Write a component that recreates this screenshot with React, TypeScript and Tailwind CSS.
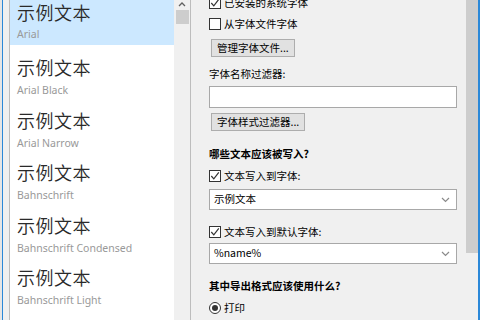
import React from "react";

const ui = { fontFamily: '"Noto Sans CJK SC", "Noto Sans", sans-serif' };
const latin = { fontFamily: '"Noto Sans", "Noto Sans CJK SC", sans-serif' };

const fonts = [
  "Arial Black",
  "Arial Narrow",
  "Bahnschrift",
  "Bahnschrift Condensed",
  "Bahnschrift Light",
];

function Check({ checked }: { checked: boolean }) {
  return (
    <div className="w-[12px] h-[12px] border border-[#333333] bg-white flex items-center justify-center shrink-0">
      {checked && (
        <svg width="10" height="10" viewBox="0 0 10 10">
          <path d="M1.3 5 L3.8 7.8 L8.8 1.3" fill="none" stroke="#333333" strokeWidth="1.2" />
        </svg>
      )}
    </div>
  );
}

function CheckRow({ checked, label, className }: { checked: boolean; label: string; className: string }) {
  return (
    <div className={"flex items-center gap-[3px] " + className}>
      <Check checked={checked} />
      <span className="text-[10.5px] text-black leading-none">{label}</span>
    </div>
  );
}

function Chevron() {
  return (
    <svg width="9" height="6" viewBox="0 0 9 6" className="shrink-0">
      <path d="M1 1 L4.5 4.5 L8 1" fill="none" stroke="#8a8a8a" strokeWidth="1.2" />
    </svg>
  );
}

function Select({ value, className }: { value: string; className: string }) {
  return (
    <div className={"w-[248px] h-[21px] border border-[#a8a8a8] bg-white flex items-center justify-between pl-[4px] pr-[6px] " + className}>
      <span className="text-[10.5px] text-black leading-none">{value}</span>
      <Chevron />
    </div>
  );
}

function Btn({ label, className }: { label: string; className: string }) {
  return (
    <div className={"self-start ml-[2px] h-[18px] border border-[#adadad] bg-[#e1e1e1] flex items-center px-[5px] " + className}>
      <span className="text-[10.5px] text-black leading-none">{label}</span>
    </div>
  );
}

export default function App() {
  return (
    <div className="w-[480px] h-[320px] bg-[#f0f0f0] flex overflow-hidden" style={ui}>
      {/* left edge */}
      <div className="w-[9px] h-full flex shrink-0">
        <div className="w-[2px] h-full bg-[#e6e6e6]" />
        <div className="w-[1px] h-full bg-[#2b88d8]" />
      </div>
      {/* font list */}
      <div className="w-[182px] h-full border-l border-r border-[#bdbdbd] bg-white flex shrink-0">
        <div className="flex-1 flex flex-col overflow-hidden">
          <div className="h-[45px] bg-[#cce8ff] flex flex-col pl-[7px] shrink-0">
            <span className="text-[18px] leading-none text-[#2a2a2a] font-[350] mt-[3px] tracking-[0.5px]">示例文本</span>
            <span className="text-[10.5px] leading-none text-[#999999] mt-[8px]" style={latin}>Arial</span>
          </div>
          {fonts.map((f) => (
            <div key={f} className="h-[52.5px] flex flex-col pl-[7px] shrink-0">
              <span className="text-[18px] leading-none text-[#2a2a2a] font-[350] mt-[13px] tracking-[0.5px]">示例文本</span>
              <span className="text-[10.5px] leading-none text-[#999999] mt-[9px]" style={latin}>{f}</span>
            </div>
          ))}
        </div>
        <div className="w-[16px] h-full bg-[#f0f0f0] flex flex-col items-center shrink-0">
          <svg width="8" height="6" viewBox="0 0 8 6" className="mt-[1px]">
            <path d="M1 5 L4 2 L7 5" fill="none" stroke="#606060" strokeWidth="1.3" />
          </svg>
          <div className="w-[13px] h-[14px] bg-[#cdcdcd] mt-[3px]" />
        </div>
      </div>
      {/* options panel */}
      <div className="w-[272px] h-full flex flex-col pl-[18px] shrink-0">
        <CheckRow checked label="已安装的系统字体" className="h-[20px] mt-[-7px]" />
        <CheckRow checked={false} label="从字体文件字体" className="h-[20px] mt-[1px]" />
        <Btn label="管理字体文件..." className="mt-[5px]" />
        <div className="h-[16px] mt-[9px] flex items-center text-[10.5px] text-black">字体名称过滤器:</div>
        <div className="w-[248px] h-[22px] mt-[4px] border border-[#a8a8a8] bg-white" />
        <Btn label="字体样式过滤器..." className="mt-[5px]" />
        <div className="h-[16px] mt-[15px] flex items-center text-[10.5px] font-bold text-black">哪些文本应该被写入?</div>
        <CheckRow checked label="文本写入到字体:" className="h-[20px] mt-[4px]" />
        <Select value="示例文本" className="mt-[3px]" />
        <CheckRow checked label="文本写入到默认字体:" className="h-[20px] mt-[12px]" />
        <Select value="%name%" className="mt-[1px]" />
        <div className="h-[16px] mt-[14px] flex items-center text-[10.5px] font-bold text-black">其中导出格式应该使用什么?</div>
        <div className="h-[20px] mt-[4px] flex items-center gap-[3px]">
          <div className="w-[12px] h-[12px] rounded-full border border-[#333333] bg-white flex items-center justify-center">
            <div className="w-[6px] h-[6px] rounded-full bg-[#333333]" />
          </div>
          <span className="text-[10.5px] text-black leading-none">打印</span>
        </div>
      </div>
      {/* right scrollbar */}
      <div className="w-[15px] h-full flex shrink-0">
        <div className="w-[3px]" />
        <div className="w-[12px] h-[253px] bg-[#cdcdcd]" />
      </div>
      <div className="w-[2px] h-full bg-[#2b88d8] shrink-0" />
    </div>
  );
}
